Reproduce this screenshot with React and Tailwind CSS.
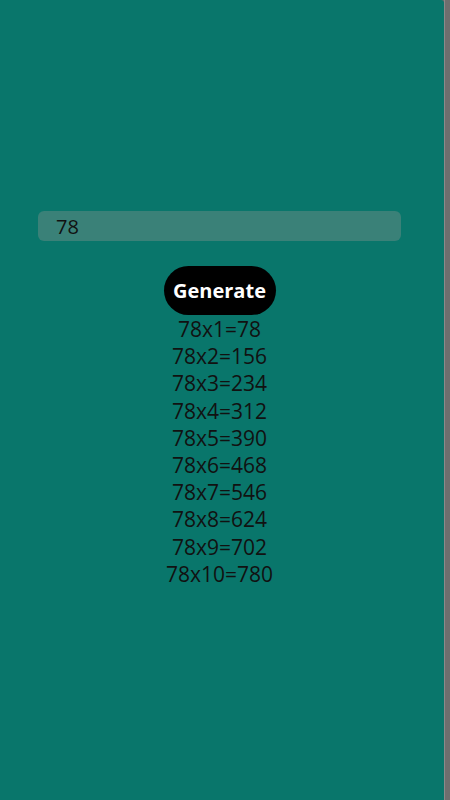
const App = () => {
  const num = 78;
  const rows = [1, 2, 3, 4, 5, 6, 7, 8, 9, 10];

  return (
    <div className="flex h-[800px] w-[450px] bg-[#6e6e6e]" style={{ fontFamily: '"Open Sans", "Noto Sans", sans-serif' }}>
      {/* MAIN */}
      <div className="flex w-[444px] flex-col items-center rounded-tr-[3px] bg-[#09766b] pr-[5px] pt-[211px]">
        <div className="flex h-[30px] w-[363px] items-center rounded-[6px] bg-[#3a8178] pl-[18px] pt-[2px] text-[20px] text-[#111]">
          78
        </div>

        <button className="mt-[25px] h-[49px] w-[112px] rounded-full bg-black text-[20px] font-bold text-white">
          Generate
        </button>

        <div className="mt-[1px] flex flex-col items-center text-[21px] leading-[27.2px] text-[#111]">
          {rows.map((i) => (
            <div key={i}>
              {num}x{i}={num * i}
            </div>
          ))}
        </div>
      </div>

      {/* SCROLLBAR STRIP */}
      <div className="w-[6px] border-l border-[#8a8a8a] bg-[#6e6e6e]"></div>
    </div>
  );
};

export default App;
